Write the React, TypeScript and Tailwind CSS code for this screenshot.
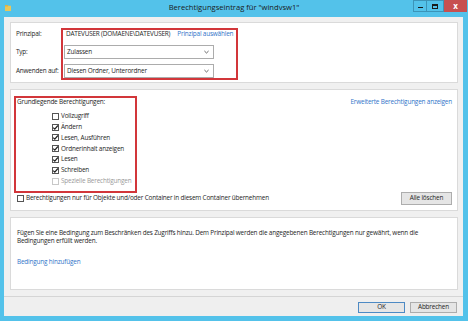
import React from "react";

const font = { fontFamily: '"Open Sans", "Noto Sans", sans-serif' };

function Check({ checked, disabled }: { checked?: boolean; disabled?: boolean }) {
  return (
    <span
      className={`relative inline-block w-[7px] h-[7px] border bg-white shrink-0 ${
        disabled ? "border-[#c8c8c8]" : "border-[#555]"
      }`}
    >
      {checked && (
        <svg viewBox="0 0 7 7" className="absolute left-[-1px] top-[-1px] w-[7px] h-[7px]">
          <path d="M1.2 3.6 L2.8 5.2 L5.9 1.5" stroke="#222" strokeWidth="1.2" fill="none" />
        </svg>
      )}
    </span>
  );
}

function Select({ value }: { value: string }) {
  return (
    <div className="w-[150px] h-[14px] border border-[#acacac] bg-white flex items-center pl-[2px] pr-[4px] justify-between">
      <span>{value}</span>
      <svg viewBox="0 0 6 4" className="w-[5px] h-[4px]">
        <path d="M0.5 0.8 L3 3.2 L5.5 0.8" stroke="#444" strokeWidth="1" fill="none" />
      </svg>
    </div>
  );
}

export default function App() {
  const perms: [string, boolean, boolean?][] = [
    ["Vollzugriff", false],
    ["Ändern", true],
    ["Lesen, Ausführen", true],
    ["Ordnerinhalt anzeigen", true],
    ["Lesen", true],
    ["Schreiben", true],
    ["Spezielle Berechtigungen", false, true],
  ];
  return (
    <div
      className="w-[468px] h-[321px] bg-[#53c2ea] flex flex-col text-[6.4px] tracking-[-0.18px] text-[#1e1e1e] leading-none"
      style={font}
    >
      {/* title bar */}
      <div className="h-[17px] relative flex items-center justify-center shrink-0">
        <svg viewBox="0 0 8 8" className="absolute left-[5px] top-[4px] w-[6px] h-[8px]">
          <rect x="0" y="1" width="8" height="7" fill="#e8c75a" />
          <rect x="0" y="0" width="4" height="2" fill="#d9b14a" />
        </svg>
        <span className="text-[7.6px] tracking-normal text-[#1a1a1a] -mt-[1px]">Berechtigungseintrag für "windvsw1"</span>
        <div className="absolute right-[1px] top-0 flex h-[12px]">
          <div className="w-[14px] h-full border border-[#3c94b8] bg-[#53c2ea] flex items-end justify-center pb-[3px]">
            <div className="w-[5px] h-[1.5px] bg-[#1a1a1a]" />
          </div>
          <div className="w-[17px] h-full border border-l-0 border-[#3c94b8] bg-[#53c2ea] flex items-center justify-center">
            <div className="w-[6px] h-[5px] border border-t-2 border-[#1a1a1a]" />
          </div>
          <div className="w-[23px] h-full bg-[#c75050] flex items-center justify-center text-white text-[8px] font-bold">
            x
          </div>
        </div>
      </div>

      {/* body */}
      <div className="flex-1 ml-[4px] mr-[5px] mb-[5px] bg-[#f0f0f0] flex flex-col">
        <div className="pl-[6px] pr-[5px] pt-[5px] flex flex-col gap-[6px]">
          {/* panel 1 */}
          <div className="relative h-[61px] bg-white border border-[#dadada] pl-[5px] pt-[5px] flex flex-col">
            <div className="flex h-[12px] items-center">
              <span className="w-[50px]">Prinzipal:</span>
              <span>DATEVUSER (DOMAENE\DATEVUSER)</span>
              <span className="ml-[7px] text-[#2f74c9]">Prinzipal auswählen</span>
            </div>
            <div className="flex h-[14px] items-center mt-[5px]">
              <span className="w-[48px]">Typ:</span>
              <Select value="Zulassen" />
            </div>
            <div className="flex h-[14px] items-center mt-[5px]">
              <span className="w-[48px]">Anwenden auf:</span>
              <Select value="Diesen Ordner, Unterordner" />
            </div>
            <div className="absolute left-[50px] top-[5px] w-[177px] h-[52px] border-2 border-[#d2363a]" />
          </div>

          {/* panel 2 */}
          <div className="relative h-[122px] bg-white border border-[#dadada] pl-[6px] pr-[5px] pt-[7px] pb-[5px] flex flex-col">
            <div className="flex-1 flex flex-col">
              <div className="flex h-[10px] items-center justify-between">
                <span>Grundlegende Berechtigungen:</span>
                <span className="text-[#2f74c9]">Erweiterte Berechtigungen anzeigen</span>
              </div>
              <div className="flex flex-col mt-[4px] pl-[35px]">
                {perms.map(([label, checked, disabled]) => (
                  <div key={label} className="flex items-center h-[10.8px] gap-[2px]">
                    <Check checked={checked} disabled={disabled} />
                    <span className={disabled ? "text-[#9a9a9a]" : ""}>{label}</span>
                  </div>
                ))}
              </div>
            </div>
            <div className="flex items-center justify-between h-[13px]">
              <div className="flex items-center gap-[2px]">
                <Check />
                <span>Berechtigungen nur für Objekte und/oder Container in diesem Container übernehmen</span>
              </div>
              <div className="w-[51px] h-[13px] border border-[#adadad] bg-[#e5e5e5] flex items-center justify-center">
                Alle löschen
              </div>
            </div>
            <div className="absolute left-[3px] top-[6px] w-[123px] h-[97px] border-2 border-[#d2363a]" />
          </div>

          {/* panel 3 */}
          <div className="h-[73px] bg-white border border-[#dadada] pl-[6px] pt-[11px] flex flex-col">
            <p className="leading-[7.5px] pr-[30px]">
              Fügen Sie eine Bedingung zum Beschränken des Zugriffs hinzu. Dem Prinzipal werden die angegebenen Berechtigungen nur gewährt, wenn die Bedingungen erfüllt werden.
            </p>
            <span className="mt-[15px] text-[#2f74c9]">Bedingung hinzufügen</span>
          </div>
        </div>

        {/* footer */}
        <div className="mt-[6px] flex-1 border-t border-[#d5d5d5] bg-[#efefef] flex items-start justify-end gap-[5px] pr-[6px] pt-[5px]">
          <div className="w-[47px] h-[11px] border border-[#4d8ac4] bg-[#e6e6e6] flex items-center justify-center">OK</div>
          <div className="w-[47px] h-[11px] border border-[#adadad] bg-[#e5e5e5] flex items-center justify-center">Abbrechen</div>
        </div>
      </div>
    </div>
  );
}
